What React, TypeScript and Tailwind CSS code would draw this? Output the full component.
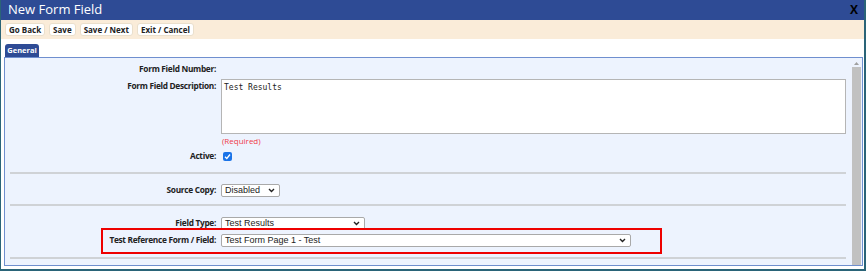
import React from "react";

const label = "text-right font-bold text-[8.3px] tracking-[-0.3px] text-[#222] pr-[5px] leading-none";
const selectBox =
  "flex items-center justify-between h-[13px] border border-[#a9a9a9] rounded-[2px] bg-white pl-[3px] pr-[4px] text-[9px] text-[#222] leading-none";

function Chevron() {
  return (
    <svg width="7" height="5" viewBox="0 0 7 5">
      <path d="M1 1 L3.5 3.5 L6 1" stroke="#222" strokeWidth="1.4" fill="none" />
    </svg>
  );
}

function Select({ value, width }: { value: string; width: string }) {
  return (
    <div className={`${selectBox} ${width}`} style={{ fontFamily: "'Liberation Sans', Arial, sans-serif" }}>
      <span>{value}</span>
      <Chevron />
    </div>
  );
}

function Rule() {
  return <div className="ml-[5px] mr-[6px] h-[2px] bg-[#cfd2d6]" />;
}

export default function App() {
  return (
    <div
      className="w-[866px] h-[272px] bg-white overflow-hidden"
      style={{ fontFamily: "'Open Sans', 'Noto Sans', sans-serif" }}
    >
      <div className="w-[866px] h-[271px] border-l border-r-2 border-b-2 border-[#2a6478] flex flex-col">
        {/* title bar */}
        <div className="h-[20px] bg-[#2e4b95] flex items-center justify-between pl-[7px] pr-[6px]">
          <span className="text-white text-[13px]">New Form Field</span>
          <span className="text-black font-bold text-[12px]">X</span>
        </div>
        {/* toolbar */}
        <div className="h-[19px] bg-[#faecd9] flex items-center gap-[4px] pl-[4px]">
          {["Go Back", "Save", "Save / Next", "Exit / Cancel"].map((b) => (
            <div
              key={b}
              className="h-[13px] px-[3px] bg-white rounded-[3px] border border-[#eadfcc] flex items-center text-[8px] font-bold text-[#222]"
            >
              {b}
            </div>
          ))}
        </div>
        {/* tabs */}
        <div className="h-[18px] flex items-end pl-[4px]">
          <div className="h-[13px] w-[34px] bg-[#2e4b95] rounded-t-[3px] flex items-center justify-center text-white text-[7.5px] font-bold">
            General
          </div>
        </div>
        {/* panel */}
        <div className="relative flex-1 ml-[3px] mr-[1px] mb-[3px] border border-[#6f8fcf] bg-[#edf3fe] flex">
          <div className="flex-1 flex flex-col pt-[6px]">
            <div className="grid grid-cols-[216px_1fr] items-center h-[11px]">
              <div className={label}>Form Field Number:</div>
              <div />
            </div>
            <div className="grid grid-cols-[216px_1fr] mt-[4px]">
              <div className={`${label} pt-[3px]`}>Form Field Description:</div>
              <div
                className="mr-[6px] h-[55px] border border-[#b5b5b5] bg-white px-[2px] pt-[2px] text-[8px] text-[#222]"
                style={{ fontFamily: "'DejaVu Sans Mono', monospace" }}
              >
                Test Results
              </div>
            </div>
            <div className="grid grid-cols-[216px_1fr] mt-[1px]">
              <div />
              <div className="text-[8px] text-[#f03a47] leading-[11px] pl-[1px]">(Required)</div>
            </div>
            <div className="grid grid-cols-[216px_1fr] items-center mt-[5px] h-[11px]">
              <div className={label}>Active:</div>
              <div className="pl-[2px]">
                <div className="w-[9px] h-[9px] rounded-[2px] bg-[#1a73e8] flex items-center justify-center">
                  <svg width="7" height="7" viewBox="0 0 7 7">
                    <path d="M1 3.8 L2.8 5.5 L6 1.5" stroke="white" strokeWidth="1.3" fill="none" />
                  </svg>
                </div>
              </div>
            </div>
            <div className="mt-[10px]"><Rule /></div>
            <div className="grid grid-cols-[216px_1fr] items-center mt-[9px] h-[14px]">
              <div className={label}>Source Copy:</div>
              <Select value="Disabled" width="w-[59px]" />
            </div>
            <div className="mt-[7px]"><Rule /></div>
            <div className="grid grid-cols-[216px_1fr] items-center mt-[10px] h-[14px]">
              <div className={label}>Field Type:</div>
              <Select value="Test Results" width="w-[144px]" />
            </div>
            <div className="grid grid-cols-[216px_1fr] items-center mt-[3px] h-[14px]">
              <div className={label}>Test Reference Form / Field:</div>
              <Select value="Test Form Page 1 - Test" width="w-[410px]" />
            </div>
            <div className="mt-[10px]"><Rule /></div>
          </div>
          {/* scrollbar */}
          <div className="w-[9px] mr-[1px] mt-[2px] flex flex-col items-center">
            <div className="h-[7px] w-full flex items-center justify-center">
              <svg width="5" height="3" viewBox="0 0 5 3"><path d="M0 3 L2.5 0 L5 3Z" fill="#a0a0a0" /></svg>
            </div>
            <div className="flex-1 w-full bg-[#c1c1c1]" />
          </div>
          {/* annotation box */}
          <div className="absolute left-[96px] top-[170px] w-[561px] h-[26px] border-2 border-[#ee0000] pointer-events-none" />
        </div>
      </div>
    </div>
  );
}
